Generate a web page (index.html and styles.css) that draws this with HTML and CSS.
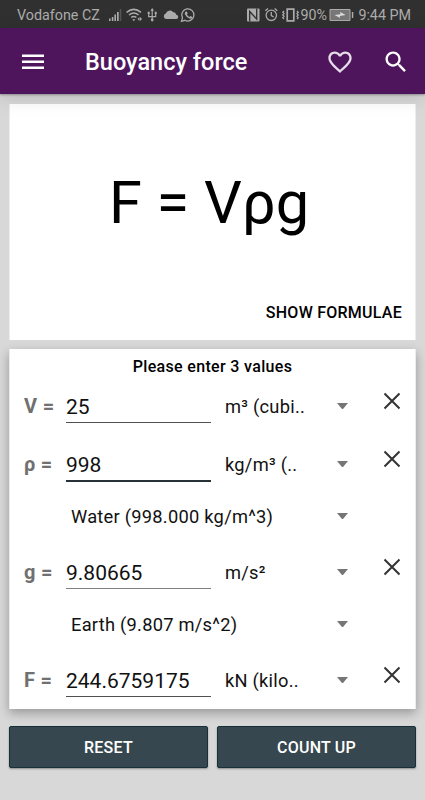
FILE: index.html
```html
<!DOCTYPE html>
<html lang="en">
<head>
    <meta charset="UTF-8">
    <meta name="viewport" content="width=device-width, initial-scale=1.0">
    <title>Buoyancy force</title>
    <link rel="stylesheet" href="styles.css">
</head>
<body>

    <!-- Status bar -->
    <div class="status-bar">
        <span class="carrier">Vodafone CZ</span>
        <svg class="status-left" width="88" height="16" viewBox="0 0 88 16">
            <path d="M1 11.5h1.6V14H1zM3.8 10h1.6v4H3.8zM6.4 7.5H8V14H6.4zM9 5h1.7v9H9z"/>
            <path d="M11.7 2h1.6v12h-1.6z" opacity=".3"/>
            <g fill="none" stroke="#acacac" stroke-width="1.5">
                <path d="M18.6 5.4q7.2-6 14.4 0M21 8q4.8-4 9.6 0M23.2 10.5q2.6-2.1 5.2 0"/>
            </g>
            <path d="M24.2 12.2h3.2l-1.6 2zM29.5 12l2-2v4zM32 10l2 2-2 2z"/>
            <g fill="none" stroke="#acacac" stroke-width="1.2">
                <path d="M44.2 2.5v11M40.7 6v3.6h7V6"/>
            </g>
            <path d="M44.2 1l1.8 2.8h-3.6zM39.7 4.8h2v2.2h-2zM46.7 4.8h2v2.2h-2z"/>
            <circle cx="44.2" cy="13" r="1.4"/>
            <path d="M58 12a2.8 2.8 0 0 1-.2-5.4 4.2 4.2 0 0 1 7.2-1.5 3.5 3.5 0 0 1 3.3 2.7 2.1 2.1 0 0 1-.3 4.2z"/>
            <path d="M73.500 14.300l1-3.400a6.100 6.100 0 1 1 2.400 2.400z" fill="none" stroke="#acacac" stroke-width="1.300"/>
            <path d="M77.500 4.700l1.300-.2.900 2.100-.8 1q1 1.700 2.500 2.300l1-1 2 1-.3 1.200q-1 1-2.500.5-3.400-1.200-4.700-4.300-.4-1.500.6-2.600z"/>
        </svg>
        <svg class="status-right" width="54" height="16" viewBox="0 0 54 16">
            <path d="M2 1.500h10.500q1 0 1 1v11q0 1-1 1H2q-1 0-1-1v-11q0-1 1-1z"/>
            <path d="M3.700 14.500v-10l7 7.500V1.500" fill="none" stroke="#303030" stroke-width="1.300"/>
            <g fill="none" stroke="#acacac" stroke-width="1.300">
                <circle cx="25.300" cy="8.300" r="5.200"/>
                <path d="M25.300 5v3.600l2.400 1.400M19.300 3.700l2.700-2.200M31.300 3.700l-2.700-2.200"/>
                <path d="M41.200 2.200h6.600v11.600h-6.600z" stroke-width="1.700"/>
                <path d="M38 4l-1.200 1.300 1.200 1.300-1.200 1.400 1.200 1.300-1.200 1.400 1.200 1.300M51 4l1.200 1.300-1.200 1.300 1.200 1.400-1.200 1.300 1.200 1.400-1.200 1.300"/>
            </g>
        </svg>
        <span class="percent">90%</span>
        <svg class="battery" width="25" height="14" viewBox="0 0 25 14">
            <path d="M1 1.500h20v11H1z" fill="#777" stroke="#acacac"/>
            <path d="M22.800 4h1.500v6h-1.500z"/>
            <path d="M5.500 7l6-.8-.5-2.200 5.700 3-6 .9.500 2.100z" fill="#ddd"/>
        </svg>
        <span class="clock">9:44 PM</span>
    </div>

    <!-- Toolbar -->
    <header class="toolbar">
        <svg class="menu" width="22" height="16" viewBox="0 0 22 16">
            <path d="M0 .5h22V3H0zM0 6.500h22V9H0zM0 12.500h22V15H0z"/>
        </svg>
        <h1>Buoyancy force</h1>
        <svg class="heart" width="28" height="28" viewBox="0 0 24 24">
            <path d="M16.500 3c-1.740 0-3.410.81-4.500 2.090C10.910 3.810 9.240 3 7.500 3 4.420 3 2 5.420 2 8.500c0 3.780 3.400 6.860 8.550 11.540L12 21.350l1.450-1.320C18.600 15.360 22 12.280 22 8.500 22 5.420 19.580 3 16.500 3zm-4.400 15.550l-.1.100-.1-.1C7.140 14.240 4 11.390 4 8.500 4 6.500 5.500 5 7.500 5c1.540 0 3.040.99 3.570 2.360h1.870C13.460 5.990 14.960 5 16.500 5c2 0 3.500 1.500 3.500 3.500 0 2.890-3.140 5.740-7.900 10.050z"/>
        </svg>
        <svg class="search" width="28" height="28" viewBox="0 0 24 24">
            <path d="M15.500 14h-.79l-.28-.27C15.410 12.590 16 11.110 16 9.500 16 5.910 13.090 3 9.500 3S3 5.910 3 9.500 5.910 16 9.500 16c1.610 0 3.090-.59 4.230-1.570l.27.28v.79l5 4.990L20.490 19l-4.990-5zm-6 0C7.010 14 5 11.990 5 9.500S7.010 5 9.500 5 14 7.010 14 9.500 11.990 14 9.500 14z"/>
        </svg>
    </header>

    <main>
        <!-- Formula -->
        <section class="card formula-card">
            <div class="formula">F = Vρg</div>
            <button class="show-formulae">SHOW FORMULAE</button>
        </section>

        <!-- Values -->
        <section class="card values-card">
            <p class="hint">Please enter 3 values</p>

            <div class="row">
                <label for="volume">V =</label>
                <input type="text" id="volume" value="25">
                <span class="unit">m³ (cubi..</span>
                <span class="arrow"></span>
                <svg class="clear" width="18" height="18" viewBox="0 0 18 18"><path d="M1.500 1.500l15 15M16.500 1.500l-15 15"/></svg>
            </div>

            <div class="row">
                <label for="density">ρ =</label>
                <input type="text" id="density" class="focused" value="998">
                <span class="unit">kg/m³ (..</span>
                <span class="arrow"></span>
                <svg class="clear" width="18" height="18" viewBox="0 0 18 18"><path d="M1.500 1.500l15 15M16.500 1.500l-15 15"/></svg>
            </div>
            <div class="row preset">
                <span class="preset-name">Water (998.000 kg/m^3)</span>
                <span class="arrow"></span>
            </div>

            <div class="row">
                <label for="gravity">g =</label>
                <input type="text" id="gravity" class="light" value="9.80665">
                <span class="unit">m/s²</span>
                <span class="arrow"></span>
                <svg class="clear" width="18" height="18" viewBox="0 0 18 18"><path d="M1.500 1.500l15 15M16.500 1.500l-15 15"/></svg>
            </div>
            <div class="row preset">
                <span class="preset-name">Earth (9.807 m/s^2)</span>
                <span class="arrow"></span>
            </div>

            <div class="row">
                <label for="force">F =</label>
                <input type="text" id="force" value="244.6759175">
                <span class="unit">kN (kilo..</span>
                <span class="arrow"></span>
                <svg class="clear" width="18" height="18" viewBox="0 0 18 18"><path d="M1.500 1.500l15 15M16.500 1.500l-15 15"/></svg>
            </div>
        </section>

        <div class="actions">
            <button>RESET</button>
            <button>COUNT UP</button>
        </div>
    </main>

</body>
</html>
```
FILE: styles.css
```css
* {
    box-sizing: border-box;
}
body {
    margin: 0;
    height: 800px;
    overflow: hidden;
    background-color: #d8d8d8;
    color: #000;
    font-family: Roboto, sans-serif;
}
svg {
    display: block;
    flex: none;
}
button {
    border: none;
    font-family: inherit;
    font-weight: 500;
    cursor: pointer;
}

/* Status bar */
.status-bar {
    height: 28px;
    padding: 2px 14px 0 17px;
    display: flex;
    align-items: center;
    background-color: #303030;
    color: #acacac;
    fill: #acacac;
    font-size: 14.3px;
    white-space: nowrap;
}
.carrier {
    width: 91px;
}
.status-right {
    margin-left: auto;
}
.percent {
    width: 28px;
}
.battery {
    margin: 0 4px 0 1px;
}

/* Toolbar */
.toolbar {
    position: relative;
    height: 66px;
    padding: 2px 15px 0 22px;
    display: flex;
    align-items: center;
    background-color: #4e155c;
    color: #fff;
    fill: #fff;
    box-shadow: 0 1px 2px rgba(0, 0, 0, 0.3), 0 4px 18px rgba(0, 0, 0, 0.13);
}
h1 {
    flex: 1;
    margin: 0 0 0 41px;
    font-size: 23.5px;
    font-weight: 500;
}
.heart {
    margin-right: 28px;
    fill: #e6dce8;
}

main {
    padding: 10px 9px 0;
}
.card {
    background-color: #fff;
    border: solid #ececec;
    border-width: 0 1px;
}
.formula-card {
    height: 236px;
    display: flex;
    flex-direction: column;
}
.formula {
    flex: 1;
    padding: 64px 7px 0 0;
    font-size: 59.5px;
    line-height: 70px;
    text-align: center;
}
.show-formulae {
    align-self: flex-end;
    margin: 0 13px 18px;
    padding: 0;
    background: none;
    color: #000;
    font-size: 16px;
    line-height: 19px;
    letter-spacing: 0.25px;
}

.values-card {
    height: 360px;
    margin-top: 9px;
    padding-top: 8px;
    box-shadow: 0 4px 10px rgba(0, 0, 0, 0.3);
}
.hint {
    margin: 0;
    height: 20px;
    font-size: 16px;
    font-weight: 500;
    line-height: 20px;
    letter-spacing: 0.33px;
    text-align: center;
}
.row {
    height: 58px;
    padding-left: 14px;
    display: grid;
    grid-template-columns: 42px 145px 14px 112px 46px 18px;
    align-items: center;
}
label {
    color: #707070;
    font-size: 20px;
    font-weight: 700;
    letter-spacing: 0.3px;
    white-space: nowrap;
}
input {
    width: 145px;
    height: 34px;
    margin-bottom: 1px;
    padding: 3px 0 0;
    border: none;
    border-bottom: 1px solid #505050;
    outline: none;
    background: none;
    color: #111;
    font-family: inherit;
    font-size: 21px;
}
input.focused {
    height: 35px;
    margin: 1px 0 0;
    padding-top: 2px;
    border-bottom: 2px solid #263238;
}
input.light {
    border-bottom-color: #808080;
}
.unit {
    grid-column: 4;
    color: #111;
    font-size: 18.3px;
    letter-spacing: 0.25px;
}
.arrow {
    width: 11px;
    border: 5.5px solid transparent;
    border-top: 6px solid #757575;
    border-bottom: 0;
}
.clear {
    margin-bottom: 11px;
    fill: none;
    stroke: #333;
    stroke-width: 2;
}
.preset {
    height: 50px;
    padding: 0 0 4px 61px;
    grid-template-columns: 266px 46px;
}
.preset-name {
    color: #111;
    font-size: 18.3px;
    letter-spacing: 0.25px;
}

.actions {
    display: flex;
    gap: 9px;
    margin-top: 17px;
}
.actions button {
    flex: 1;
    height: 42px;
    background-color: #37474f;
    color: #fff;
    border: 1px solid #173039;
    border-radius: 2px;
    font-size: 16px;
    letter-spacing: 0.25px;
    box-shadow: 0 1px 2px rgba(0, 0, 0, 0.35);
}
```
